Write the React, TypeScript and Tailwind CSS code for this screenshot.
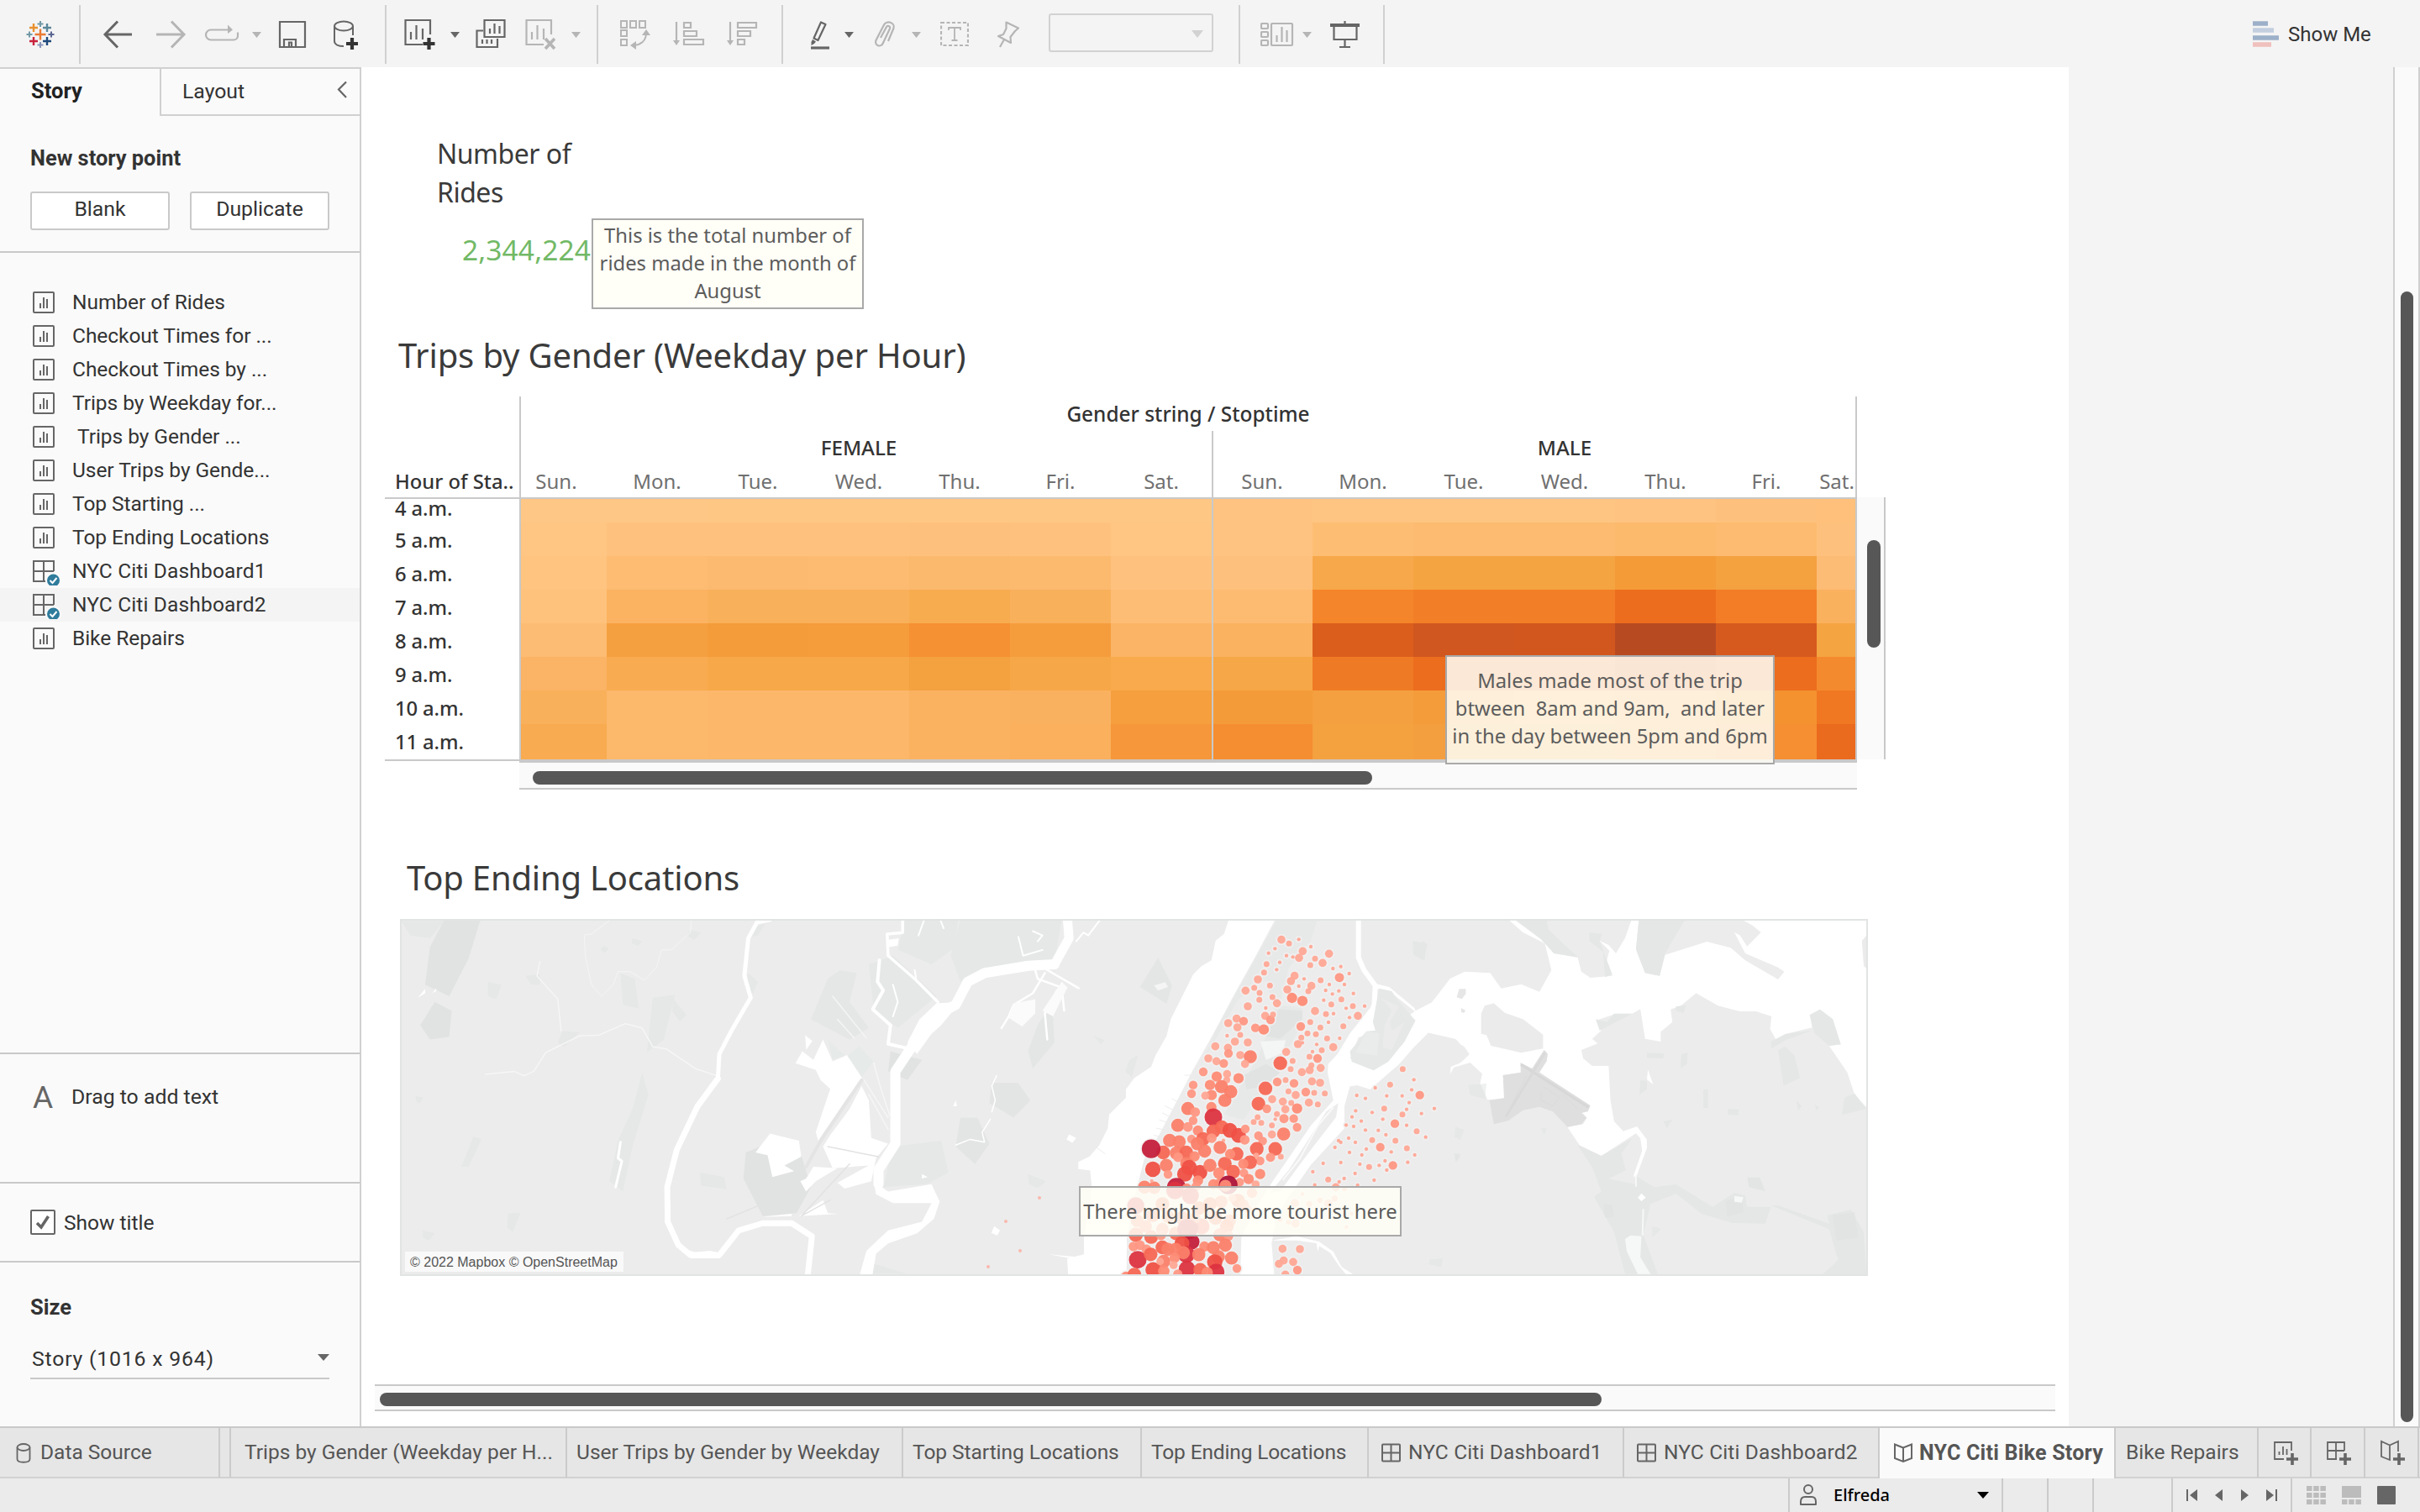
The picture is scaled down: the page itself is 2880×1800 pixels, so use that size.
import type { ReactNode } from 'react'

const UI = 'font-[Roboto,sans-serif]'
const CHART = "font-['Noto_Sans',sans-serif]"

/* ---------- toolbar ---------- */

function Sep({ className = '' }: { className?: string }) {
  return <div className={`h-[70px] w-[2px] shrink-0 bg-[#d0d0d0] ${className}`} />
}

function Ico({ w, h = 40, className = '', children }: { w: number; h?: number; className?: string; children: ReactNode }) {
  return (
    <svg width={w} height={h} viewBox={`0 0 ${w} ${h}`} fill="none" className={`shrink-0 ${className}`}>
      {children}
    </svg>
  )
}

function Caret({ className = '', color = '#b5b5b5' }: { className?: string; color?: string }) {
  return (
    <Ico w={11} h={8} className={className}>
      <path d="M0 1H11L5.5 8Z" fill={color} />
    </Ico>
  )
}

const DARK = '#666666'
const DIM = '#b5b5b5'

function Toolbar() {
  return (
    <div className="flex h-[80px] shrink-0 items-center bg-[#f4f4f4] pt-[2px]">
      <Ico w={34} className="ml-[31px]">
        <g strokeWidth="2.4">
          <path d="M17 13.5v13M10.5 20h13" stroke="#eb7a32" />
          <path d="M9 7v10M4 12h10" stroke="#e8912e" />
          <path d="M25 7v10M20 12h10" stroke="#5b879b" />
          <path d="M9 23v10M4 28h10" stroke="#c8223c" />
          <path d="M25 23v10M20 28h10" stroke="#1f4a7d" />
        </g>
        <g strokeWidth="2">
          <path d="M17 4v7M13.500 7.500h7" stroke="#7299a6" />
          <path d="M17 29v7M13.500 32.500h7" stroke="#8a96ba" />
          <path d="M4 16.500v7M.5 20h7" stroke="#7299a6" />
          <path d="M30 16.500v7M26.500 20h7" stroke="#5b6591" />
        </g>
      </Ico>
      <Sep className="ml-[29px]" />
      <Ico w={36} className="ml-[26px]">
        <path d="M35 20H3M18 4.500L3 20L18 35.500" stroke={DARK} strokeWidth="3" />
      </Ico>
      <Ico w={36} className="ml-[28px]">
        <path d="M0 20H33M18 4.500L33 20L18 35.500" stroke={DIM} strokeWidth="3" />
      </Ico>
      <Ico w={42} className="ml-[21px]">
        <path d="M32 14.500H8a6 6 0 0 0-6 6v0a6 6 0 0 0 6 6H35a5 5 0 0 0 5-5v-4" stroke={DIM} strokeWidth="2.200" />
        <path d="M28 8.500L34 14.500L28 19Z" fill={DIM} />
      </Ico>
      <Caret className="ml-[15px]" />
      <Ico w={34} className="ml-[20px]">
        <path d="M2 5H32V35H2ZM7 35V26H21V35M13 35V29.500H16V35" stroke={DARK} strokeWidth="2.200" />
      </Ico>
      <Ico w={32} className="ml-[32px]">
        <ellipse cx="12" cy="10" rx="11" ry="5.500" stroke={DARK} strokeWidth="2" />
        <path d="M1 10V28C1 32 6 34 12 34M23 10V21" stroke={DARK} strokeWidth="2" />
        <path d="M22 24V38M15 31H29" stroke="#333" strokeWidth="4.200" />
      </Ico>
      <Sep className="ml-[29px]" />
      <Ico w={38} className="ml-[21px]">
        <path d="M31 20V3H1.500V32H22M8 26V17M14.500 26V9M22 26V13" stroke={DARK} strokeWidth="2.200" />
        <path d="M29.500 24V38M22.500 31H36.500" stroke="#333" strokeWidth="4.200" />
      </Ico>
      <Caret className="ml-[17px]" color={DARK} />
      <Ico w={36} className="ml-[19px]">
        <path d="M10.500 3H34.500V23H10.500ZM17 19V13M22.500 19V7M28.500 19V10" stroke={DARK} strokeWidth="2.200" />
        <path d="M9 15.500H1.500V35H26V25M8 31V26M13.500 31V26M19 31V26" stroke={DARK} strokeWidth="2.200" />
      </Ico>
      <Ico w={38} className="ml-[23px]">
        <path d="M31 20V3H1.500V32H22M8 26V17M14.500 26V9M22 26V13" stroke={DIM} strokeWidth="2.200" />
        <path d="M24 25L35 37M35 25L24 37" stroke={DIM} strokeWidth="3.600" />
      </Ico>
      <Caret className="ml-[17px]" />
      <Sep className="ml-[19px]" />
      <Ico w={38} className="ml-[25px]">
        <g stroke={DIM} strokeWidth="2">
          <path d="M2 4H9V12H2ZM13 4H20V12H13ZM24 4H31V12H24ZM2 15H9V22H2ZM2 26H9V33H2Z" />
          <path d="M32 20C31 28 26 32 18 33" />
        </g>
        <path d="M27 21H37L32 14ZM20 28V38L13 33Z" fill={DIM} />
      </Ico>
      <Ico w={38} className="ml-[26px]">
        <path d="M4 5V28M13 6H21V12H13ZM13 16H28V22H13ZM13 26H36V32H13Z" stroke={DIM} strokeWidth="2.200" />
        <path d="M0 27H8L4 33Z" fill={DIM} />
      </Ico>
      <Ico w={38} className="ml-[26px]">
        <path d="M4 5V28M13 6H35V12H13ZM13 16H28V22H13ZM13 26H21V32H13Z" stroke={DIM} strokeWidth="2.200" />
        <path d="M0 27H8L4 33Z" fill={DIM} />
      </Ico>
      <Sep className="ml-[27px]" />
      <Ico w={24} className="ml-[32px]">
        <path d="M13 5.500L18.500 8L9.500 27L4.500 24.500Z" stroke={DARK} strokeWidth="2.200" strokeLinejoin="round" />
        <path d="M3 26L7 28.500L5 31L1.500 33V29Z" fill={DARK} />
        <path d="M1 36H23" stroke={DARK} strokeWidth="3.200" />
      </Ico>
      <Caret className="ml-[17px]" color={DARK} />
      <Ico w={26} className="ml-[24px]">
        <path
          d="M8 24L15 11C16 8.500 20 10 19 13L11 30C8.500 36.500 0 33 2.500 27L12 8.500C15 2.500 25.500 6 23.500 12.500L17 28"
          stroke={DIM}
          strokeWidth="2.200"
        />
      </Ico>
      <Caret className="ml-[19px]" />
      <Ico w={34} className="ml-[23px]">
        <rect x="1" y="6" width="32" height="27" stroke={DIM} strokeWidth="2.200" strokeDasharray="4 2.500" />
        <path d="M10 15V12H24V15M17 12V27M13.500 27H20.500" stroke={DIM} strokeWidth="1.800" />
      </Ico>
      <Ico w={28} className="ml-[33px]">
        <path d="M11.500 5.500L26 12.500L22 16L16.500 23L17 30L2 22L8 20L11.500 13ZM9 26L4 35" stroke={DIM} strokeWidth="2.200" strokeLinejoin="round" />
      </Ico>
      <div className="ml-[34px] mt-[-4px] flex h-[46px] w-[196px] shrink-0 items-center justify-end rounded-[3px] border-2 border-[#d2d2d2] pr-[10px]">
        <Ico w={14} h={9} className="mt-[2px]">
          <path d="M0 0H14L7 9Z" fill="#d2d2d2" />
        </Ico>
      </div>
      <Sep className="ml-[30px]" />
      <Ico w={40} className="ml-[24px]">
        <g stroke={DIM} strokeWidth="2.200">
          <rect x="1" y="7" width="8" height="6" rx="1" />
          <rect x="1" y="17" width="8" height="6" rx="1" />
          <rect x="1" y="27" width="8" height="6" rx="1" />
          <rect x="13" y="7" width="25" height="26" rx="1" />
          <path d="M19.500 29V21M25.500 29V11M31.500 29V15" />
        </g>
      </Ico>
      <Caret className="ml-[10px]" />
      <Ico w={36} className="ml-[22px]">
        <path d="M17.500 4V8M4.500 10V26H31.500V10M17.500 26V34.500M11 35H24" stroke={DARK} strokeWidth="2.200" />
        <path d="M0 9H35" stroke={DARK} strokeWidth="4" />
      </Ico>
      <Sep className="ml-[27px]" />
      <Ico w={34} className="ml-auto">
        <path d="M1 7H19" stroke="#9db0c9" strokeWidth="5.500" />
        <path d="M1 15H26" stroke="#c3cfdf" strokeWidth="5.500" />
        <path d="M1 24H32" stroke="#9db0c9" strokeWidth="5.500" />
        <path d="M1 32H23" stroke="#efc0bd" strokeWidth="5.500" />
      </Ico>
      <span className="ml-[9px] mr-[55px] w-[102px] whitespace-nowrap text-[24px] font-[400] text-[#333]">Show Me</span>
    </div>
  )
}

/* ---------- sidebar ---------- */

const points: [string, boolean][] = [
  ['Number of Rides', false],
  ['Checkout Times for ...', false],
  ['Checkout Times by ...', false],
  ['Trips by Weekday for...', false],
  ['\u00a0Trips by Gender ...', false],
  ['User Trips by Gende...', false],
  ['Top Starting ...', false],
  ['Top Ending Locations', false],
  ['NYC Citi Dashboard1', true],
  ['NYC Citi Dashboard2', true],
  ['Bike Repairs', false],
]

function SheetIcon() {
  return (
    <Ico w={34} h={34}>
      <rect x="1" y="5" width="24" height="24" rx="1" stroke={DARK} strokeWidth="2" />
      <path d="M9 24V18M13 24V11M17 24V13" stroke={DARK} strokeWidth="2" />
    </Ico>
  )
}

function DashIcon() {
  return (
    <Ico w={34} h={34}>
      <path d="M25 17V5H1V29H15M13 5V29M1 17H25" stroke={DARK} strokeWidth="2" />
      <circle cx="24.500" cy="28" r="9.500" fill="#fafafa" />
      <circle cx="24.500" cy="28" r="7.500" fill="#2f7c9c" />
      <path d="M20.500 28L23.500 31L28.500 25" stroke="#fff" strokeWidth="2" />
    </Ico>
  )
}

function Sidebar() {
  return (
    <aside className="flex w-[430px] shrink-0 flex-col border-r-2 border-t-2 border-[#d0d0d0] bg-[#fafafa] text-[24.800px] font-[400] text-[#333]">
      <div className="flex h-[56px] shrink-0">
        <div className="w-[190px] pl-[37px] pt-[6px] text-[25.500px] font-bold leading-[40px] text-[#222]">Story</div>
        <div className="flex flex-1 justify-between border-b-2 border-l-2 border-[#d0d0d0] pl-[25px] pr-[14px]">
          <span className="pt-[7px] leading-[40px]">Layout</span>
          <Ico w={14} h={22} className="mt-[14px]">
            <path d="M12 1.500L3 10.500L12 20" stroke={DARK} strokeWidth="2.200" />
          </Ico>
        </div>
      </div>
      <div className="flex h-[163px] shrink-0 flex-col border-b-2 border-[#c9c9c9] pl-[36px]">
        <div className="mt-[30px] text-[25.400px] font-bold leading-[40px]">New story point</div>
        <div className="mt-[20px] flex gap-[24px]">
          <button className="h-[46px] w-[166px] rounded-[3px] border-2 border-[#c9c9c9] bg-white pb-1">Blank</button>
          <button className="h-[46px] w-[166px] rounded-[3px] border-2 border-[#c9c9c9] bg-white pb-1">Duplicate</button>
        </div>
      </div>
      <div className="h-[954px] shrink-0 border-b-2 border-[#c9c9c9] pt-[39px]">
        {points.map(([name, dash]) => (
          <div key={name} className={`flex h-[40px] items-center pl-[39px] ${name.endsWith('2') ? 'bg-[#f4f4f4]' : ''}`}>
            {dash ? <DashIcon /> : <SheetIcon />}
            <span className={`ml-[13px] whitespace-nowrap text-[24.500px] ${dash ? 'tracking-[0.150px]' : 'tracking-[-0.050px]'}`}>{name}</span>
          </div>
        ))}
      </div>
      <div className="flex h-[154px] shrink-0 border-b-2 border-[#c9c9c9] pl-[39px]">
        <span className="mt-[27px] w-[34px] text-[37px] leading-[50px] text-[#666]">A</span>
        <span className="ml-[12px] mt-[31px] leading-[40px]">Drag to add text</span>
      </div>
      <div className="flex h-[94px] shrink-0 items-center border-b-2 border-[#c9c9c9] pl-[36px]">
        <div className="flex h-[30px] w-[30px] items-center justify-center rounded-[2px] border-2 border-[#666] bg-white">
          <Ico w={18} h={18}>
            <path d="M2 10L7 15L15.500 2" stroke={DARK} strokeWidth="3.600" />
          </Ico>
        </div>
        <span className="ml-[10px] mt-[3px] text-[24.500px]">Show title</span>
      </div>
      <div className="flex flex-1 flex-col pl-[36px]">
        <div className="mt-[33px] text-[25.500px] font-bold leading-[40px]">Size</div>
        <div className="mt-[16px] flex h-[50px] w-[356px] items-center justify-between border-b-2 border-[#c9c9c9] pl-[2px]">
          <span className="mt-[3px] tracking-[0.8px]">Story (1016 x 964)</span>
          <Ico w={14} h={8}>
            <path d="M0 0H14L7 8Z" fill={DARK} />
          </Ico>
        </div>
      </div>
    </aside>
  )
}

/* ---------- heat map ---------- */

const days = ['Sun.', 'Mon.', 'Tue.', 'Wed.', 'Thu.', 'Fri.', 'Sat.']

const heat: [string, string][] = [
  ['4 a.m.', 'fec785 fec785 fec784 fec784 fec783 fec784 fec784 fec381 fec582 fec582 fec582 fec381 fec17d fec07b'],
  ['5 a.m.', 'fec583 fec27e fec27e fec27e fec17d fec27e fec682 fec381 fdbe74 fcbb70 fcbb70 fcba6d fcbb70 fec17d'],
  ['6 a.m.', 'fec480 fdbc72 fbba6f fcbb71 fbb96d fcba6f fec27e fec17d f7a84a f5a442 f5a442 f49b38 f4a140 fdbc75'],
  ['7 a.m.', 'fec27c fbb361 f9b05a f9b05a f8ac50 f9b05b fdbd75 fcbb71 f4852a f27f27 f27f27 ec6d1e f27d26 fab15e'],
  ['8 a.m.', 'fdbc73 f5a040 f49c3a f59c3b f59033 f59d3d fbb465 fab260 dc5e1d d0571f d1571e b84a22 d65a1e f5a442'],
  ['9 a.m.', 'fbb365 f8ab50 f7a848 f7a848 f4a140 f6a747 f9aa4c f6a747 ef7a25 ec6d1e ec6d1e e0611d ec6d1e f48a2e'],
  ['10 a.m.', 'f9b05a fcb86b fcb76a fcb76a fab260 fab15f f59f3e f49b39 f5a040 f49c3a f59f3e f5973a f4922f f07823'],
  ['11 a.m.', 'f8ab50 fcb86b fcb76a fcb76a fab260 fab05c f5973a f58e31 f4a140 f49f3f f49f3f f5973a f58f31 ea6a1e'],
]

function Note({ className, children }: { className: string; children: ReactNode }) {
  return (
    <div className={`absolute whitespace-pre border-2 border-[#a9a9a9] bg-[#fffef6]/85 text-center text-[23.800px] font-[400] leading-[33px] text-[#5c5c5c] ${className}`}>
      {children}
    </div>
  )
}

function HeatMap() {
  return (
    <div className="relative mt-[22px] pl-[28px] text-[24px] leading-[40px]">
      <div className="flex h-[122px] w-[1752px] border-b-2 border-[#c9c9c9]">
        <div className="flex w-[160px] items-end pl-[12px] text-[23.800px] font-[550] text-[#333]">
          <span className="mb-[-1px]">Hour of Sta..</span>
        </div>
        <div className="w-[1592px] overflow-hidden border-x-2 border-[#c9c9c9] pt-[1px]">
          <div className="text-center text-[24.400px] font-[550] text-[#333]">Gender string / Stoptime</div>
          <div className="ml-[-18px] flex w-[1680px]">
            {['FEMALE', 'MALE'].map((g, i) => (
              <div key={g} className={i ? 'w-[838px] border-l-2 border-[#c9c9c9]' : 'w-[840px]'}>
                <div className="text-center text-[24.200px] font-[550] text-[#333]">{g}</div>
                <div className={`flex text-[#707070] ${i ? 'ml-[-2px]' : ''}`}>
                  {days.map((d) => (
                    <div key={d} className={i && d === 'Sat.' ? 'w-[48px] shrink-0 text-center' : 'w-[120px] shrink-0 text-center'}>
                      {d}
                    </div>
                  ))}
                </div>
              </div>
            ))}
          </div>
        </div>
      </div>
      <div className="flex">
        <div className="flex h-[312px] w-[160px] flex-col border-b-2 border-[#c9c9c9] pl-[12px] text-[23.800px] font-[550] tracking-[-0.1px] text-[#333]">
          {heat.map(([h], i) => (
            <div key={h} className={i ? 'h-[40px] shrink-0 leading-[42px]' : 'h-[28px] shrink-0 leading-[23px]'}>
              {h}
            </div>
          ))}
        </div>
        <div className="grid h-[312px] w-[1592px] grid-cols-[102px_repeat(12,120px)_46px] grid-rows-[28px_repeat(6,40px)_42px] border-2 border-t-0 border-[#c9c9c9]">
          {heat.flatMap(([h, row]) =>
            row.split(' ').map((c, j) => (
              <div key={h + j} className={j === 7 ? 'border-l-2 border-[#c9c9c9]' : ''} style={{ backgroundColor: '#' + c }} />
            )),
          )}
        </div>
        <div className="mt-[-2px] flex h-[312px] w-[34px] justify-end border-r-2 border-[#c9c9c9] bg-[#fafafa] pr-[4px] pt-[51px]">
          <div className="h-[128px] w-[16px] rounded-full bg-[#575757]" />
        </div>
      </div>
      <div className="ml-[160px] flex h-[34px] w-[1592px] border-y-2 border-[#c9c9c9] bg-[#fafafa] pl-[16px] pt-[10px]">
        <div className="h-[16px] w-[999px] rounded-full bg-[#575757]" />
      </div>
      <Note className="left-[1290px] top-[308px] h-[130px] w-[392px] pt-[12px]">{'Males made most of the trip\nbtween  8am and 9am,  and later\nin the day between 5pm and 6pm'}</Note>
    </div>
  )
}

/* ---------- map ---------- */

// x, y, radius of each station, in thirds of a pixel from (1240, 1080)
const stations = `
855,116,14 882,130,10 917,115,6 960,141,6 931,157,14 918,181,14 873,173,6 896,178,6 832,148,6 809,164,6 849,197,6 802,203,10 838,223,6 793,233,10 771,258,14
975,184,10 1025,166,14 1002,199,14 958,207,10 1039,219,6 1067,212,6 1097,237,6 1062,251,16 902,245,14 889,264,14 936,256,6 995,261,10 1080,276,6 1026,276,6 917,282,6 962,281,14 951,300,10
876,294,14 893,324,18 930,335,18 1013,297,6 1037,310,6 1060,299,6 1112,308,6 1006,332,6 1069,329,10 1033,347,10 1110,353,10 1152,353,6 1086,361,6 1128,388,14 1098,394,6 1014,382,10 1041,380,6 975,371,14
958,410,10 1023,411,6 924,426,15 994,430,10 1076,425,10 1063,468,6 1018,469,10 978,454,10 948,451,10 926,466,10 914,489,14 930,484,6 981,490,6 1040,500,14 999,511,10 966,516,6 955,534,10 984,540,15 962,565,10 995,574,14 956,582,14 928,589,14
814,280,10 777,306,10 758,288,10 727,298,14 776,331,10 823,321,10 839,343,14 735,354,14 799,360,6 797,388,14 816,402,15 825,383,10 762,431,15 792,437,18 695,398,14 720,407,15 665,414,14 698,429,14 708,456,10 661,459,6 689,480,14 735,483,14 664,502,14 666,522,15 619,497,14 708,528,14 744,534,23 725,560,14 594,540,14 623,550,14 649,558,15
872,517,14 851,557,24 895,549,10 888,578,10 576,588,15 624,605,18 661,596,14 702,611,18 660,617,12 641,641,23 600,635,18 674,659,23 653,690,23 606,671,18 583,673,14 540,635,15 534,666,15 605,714,18 521,719,23 547,732,17
798,647,24 773,702,24 822,686,14 803,720,15 840,624,15 870,617,10 900,629,15 964,622,14 993,627,14 880,658,10 906,671,14 942,660,15 972,663,10 1010,665,10 860,694,14 890,699,10 953,698,14 985,704,10 911,719,18 869,722,14 839,739,10 833,757,6 864,755,16 899,755,15 911,786,15 770,750,10 756,767,10 783,770,10 821,779,10 863,810,23 821,812,14 773,816,15 788,835,15
612,750,31 485,779,23 540,762,15 521,785,17 557,798,18 612,800,24 642,786,24 671,797,26 702,815,26 726,792,15 724,831,17 456,833,23 490,838,23 534,828,15 575,828,24 606,825,17 648,833,6 555,845,23 636,858,23 581,871,23 433,876,24 480,878,23 515,876,24 545,890,18 390,863,33 396,936,27 444,922,23 486,893,17 517,915,23 526,930,27 564,947,26 510,953,27 600,922,23 653,916,24 683,945,24 695,881,24 672,882,18
767,863,24 833,863,24 816,893,16 853,891,10 765,887,10 779,906,15 743,911,24 719,917,18 721,949,15 779,953,18 738,971,18 450,954,15 557,976,18 632,950,20 612,990,18 636,988,20 706,982,15 763,990,14 480,1000,33 665,992,33 655,995,21 366,1000,23 401,1002,22 392,978,6 550,998,16 517,1005,18
335,1066,30 475,1012,31 530,1030,30 700,1048,24 640,1052,22 600,1060,24 560,1075,24 430,1060,24 395,1100,24 450,1105,22 500,1110,24 570,1140,28 530,1140,30 620,1110,24 670,1120,22 720,1062,18 750,1020,18 680,1040,14 340,1120,22 370,1140,22 660,1140,24 430,1150,22 600,1090,14 735,1078,14 545,1110,20
335,1170,25 390,1178,24 478,1165,24 425,1172,17 635,1170,23 666,1174,17 520,1150,36 535,1195,27 327,1212,17 350,1207,17 373,1222,17 430,1215,24 500,1201,26 580,1212,18 655,1207,23 612,1216,23 342,1259,31 388,1240,24 450,1222,23 477,1222,23 516,1240,30 505,1234,23 560,1241,23 630,1248,23 677,1253,23 435,1265,23 474,1252,18 617,1267,27 696,1290,15 397,1295,27 518,1292,29 565,1295,24 622,1302,29 422,1265,13 300,1320,18 330,1312,24 435,1300,20 485,1310,16 590,1305,20 470,1278,14
859,1220,14 921,1221,14 863,1262,14 897,1267,14 846,1274,14 912,1296,15 869,1312,14
1288,578,10 1328,616,6 1243,634,10 1190,645,6 1320,652,6 1349,671,15 1124,672,6 1155,683,6 1231,674,6 1286,674,6 1311,698,6 1401,719,6 1222,719,10 1302,722,6 1120,727,6 1179,733,6 1287,740,10 1355,737,6 1107,749,6 1217,757,6 1140,764,6 1260,773,15 1086,778,6 1113,783,6 1302,779,6 1155,796,6 1201,797,6 1338,800,10 1228,813,6 1370,821,6 1095,825,6 1059,834,6 1067,840,6 1119,840,6 1179,832,10 1262,834,10 1208,857,15 1046,858,6 1158,864,6 1303,861,10 1098,876,6 1142,885,6 1247,874,6 1331,885,6 1067,912,6 1004,915,6 1225,906,6 1306,911,6 1135,918,6 1204,922,6 1168,928,10 1253,922,15 1231,939,6 967,945,6 1118,951,6 1079,969,6 1022,973,10 1061,981,6 1186,975,6 974,992,6 1127,993,6 1049,1000,14
993,1047,9 1022,1058,14 1045,1040,10 954,1060,10 903,1057,14 930,1024,6 850,1115,8 905,1130,14 1105,1095,6 1087,1142,6 880,1125,8 1080,1005,8`
  .trim()
  .split(/\s+/)
  .map((s) => s.split(',').map(Number))

const darkStations = new Set(['665,992', '520,1150', '535,1195', '390,863', '480,1000'])

function tone(x: number, y: number, r: number) {
  if (darkStations.has(`${x},${y}`)) return r === 33 && x === 665 ? '#ad1238' : '#c41f3a'
  if (r >= 29) return '#dc3340'
  if (r >= 26) return '#ef5045'
  if (r >= 24) return '#f66753'
  if (r >= 22) return '#fa7f69'
  if (r >= 18) return '#fd8b75'
  if (r >= 15) return '#fe9783'
  return '#ffa695'
}

const WEST = 'translate(460 1000) scale(0.57398 0.34435)'
const MID = 'translate(1240 1080) scale(0.33333)'
const EAST = 'translate(1600 1060) scale(0.43367 0.33333)'

function River({ d, w, c = '#ffffff' }: { d: string; w: number; c?: string }) {
  return <path d={d} fill="none" stroke={c} strokeWidth={w} vectorEffect="non-scaling-stroke" strokeLinejoin="round" strokeLinecap="round" />
}

function CityMap() {
  return (
    <svg width="1747" height="425" viewBox="476 1094 1747 425" className="block">
      <rect x="476" y="1094" width="1747" height="425" fill="#ececec" />
      <g transform={WEST}>
        <g fill="#e1e2e2">
          <path d="M120 275H195L170 410L130 540L80 500L90 370Z" />
          <path d="M100 560L135 590L130 680L90 690L70 640Z" />
          <path d="M940 450L975 460L960 560L1000 650L960 690L880 620L915 480Z" opacity=".6" />
          <path d="M745 1080L790 1050L860 1090L880 1200L850 1290L780 1300L740 1170Z" />
          <path d="M1255 840L1310 840L1335 900L1300 960L1250 910Z" opacity=".8" />
          <path d="M1190 960L1225 960L1250 1050L1220 1120L1180 1060Z" opacity=".8" />
          <path d="M1380 560L1385 700L1340 790L1330 730L1350 640Z" opacity=".7" />
          <path d="M1045 730L1110 760L1080 830L1040 800Z" />
        </g>
        <g fill="#e5e8e7">
          <path d="M30 280H120L90 340L50 330Z" />
          <path d="M530 805L543 880L510 1060L490 1215L462 1180L480 1040L510 930Z" />
          <path d="M485 460L515 480L523 583L490 570Z" />
          <path d="M552 545L598 535L575 690L540 735Z" />
          <path d="M1075 275H1185L1180 370L1130 430L1060 380Z" />
          <path d="M1000 430L1050 400L1140 540L1060 650L1010 585Z" />
          <path d="M1190 275H1400L1385 420L1240 440L1190 490L1170 400Z" />
          <path d="M1050 1060L1150 1040L1165 1150L1120 1190L1030 1200Z" />
          <path d="M155 1130L180 1025L197 1035L170 1130Z M252 1290L278 1290L262 1355L250 1340Z M650 1150L700 1165L705 1207L652 1195Z" />
          <path d="M1540 760L1558 745L1545 820L1532 800Z M210 490L238 500L228 550L210 540Z M595 550L622 605L608 628L592 590Z" />
          <path d="M75 1350L100 1360L88 1385L75 1375Z M450 365L462 375L452 390L443 378Z M510 340L530 350L522 365L508 358Z" />
          <path d="M1330 1155L1368 1180L1350 1203L1332 1190Z M630 310L652 320L638 345L622 330Z M60 885L76 890L70 910L62 905Z" />
          <path d="M288 470L318 465L318 500L300 500Z M365 660L400 665L368 715L355 700Z M1000 1460L1080 1500H990Z" />
          <path d="M750 460L770 490L760 530L745 520Z M760 300L785 290L770 330L755 335Z" />
        </g>
        <River d="M465 275L425 325L410 328L412 400L425 500L445 540L470 500L480 455L505 455L535 485L560 440L570 380L590 380L630 320L632 275" w={1} c="#f5f5f5" />
        <River d="M318 420L312 470L355 550L362 660M205 810L265 800L285 815L305 800L330 735L400 677L440 675L495 635L530 650L552 715L580 722L640 790L685 815" w={1.300} c="#f7f7f7" />
        <River d="M485 1045L480 1100L488 1110L475 1200" w={3} />
        <River d="M795 275L768 285L750 340L742 470L755 545L715 660L690 740L687 825L645 920L602 1070L582 1200" w={5} />
        <River d="M687 825L645 920L602 1070L582 1200L583 1320L605 1400L630 1435L690 1435L730 1350L780 1325L840 1325L882 1370L873 1510" w={7} />
        <path d="M610 1410L640 1425L670 1420L700 1430L690 1446L630 1446Z" fill="#fff" />
        <River d="M1412 275L1415 340L1385 430" w={11} />
        <River d="M1385 430L1330 435L1240 460L1205 490L1180 570L1125 620L1095 700L1055 800L1055 960L1055 1050L1020 1140L1020 1190" w={12} />
        <path d="M1140 565L1190 560L1150 640L1130 670L1100 740L1080 700L1105 620Z" fill="#fff" />
        <path d="M1010 1180L1040 1215L1130 1190L1147 1250L1135 1310L1100 1360L1040 1395L1015 1430L1007 1510H980L995 1420L1040 1350L1110 1320L1130 1255L1050 1255L1015 1225Z" fill="#fff" />
        <River d="M1070 275L1070 320L1038 325L1040 400L1095 480L1143 560" w={3.500} />
        <River d="M1022 415L1018 490L1030 520L1008 585L1045 640L1040 705L1085 722" w={4} />
        <River d="M1115 275L1103 330M1148 275L1155 305M1095 450L1098 480M1050 500L1060 560L1050 610" w={2} />
        <path d="M1040 345L1062 340L1060 365L1042 370Z" fill="#fff" />
        <River d="M1345 450L1350 480L1400 510L1405 590M1360 440L1435 512M1365 460L1340 530L1300 570L1290 610L1275 650M1390 520L1365 600L1370 690" w={2.500} />
        <path d="M1300 565L1345 550L1345 600L1318 645L1290 615Z M1400 490L1412 510L1382 610L1360 590Z" fill="#fbfbfb" />
        <River d="M1430 350L1445 320L1455 330L1480 275M1310 335L1320 400L1360 380M1340 315L1360 330L1350 350" w={2} />
        <River d="M1265 815L1255 850L1262 900L1255 940M1252 965L1235 1010L1240 1045L1210 1035L1180 1055" w={1.500} />
        <g fill="#fff">
          <path d="M905 690L925 765L960 740L988 830L960 880L895 1040L890 1010L920 860L900 830L890 795L848 772L862 730L885 760Z" />
          <path d="M868 675L883 695L870 725Z" />
          <path d="M985 850L1000 900L1005 1030L1040 1050L1015 1100L1005 1180L950 1205L935 1185L1000 1125L925 1135L905 1060L920 1020L960 930Z" />
          <path d="M795 1015L855 1040L860 1095L825 1125L845 1145L800 1165L790 1090L765 1080Z" />
          <path d="M870 1170L885 1130L935 1135L890 1180L870 1215L858 1180Z" />
          <path d="M855 1300L905 1245L915 1290L938 1292ZM778 1303L840 1292L840 1300Z" />
          <path d="M65 545L80 515L80 530ZM95 530L103 512L103 522Z" />
          <path d="M1110 1155L1122 1165L1110 1170ZM1180 900L1183 920H1175ZM1260 1335L1272 1350L1266 1367L1254 1358Z M1415 1018L1430 1030L1422 1047L1410 1035Z" />
        </g>
        <g fill="#e6eae9">
          <path d="M915 690L950 745L925 760ZM955 745L980 712L1010 765L985 820Z" />
        </g>
        <River d="M985 830L900 1040L870 1130" w={4} c="#e4e4e4" />
        <River d="M1010 770L1025 860L1045 960M990 830L1040 960M1000 880L1040 1000" w={1.500} c="#f6f6f6" />
        <River d="M960 1120L860 1300L920 1245M915 1060L1020 1095M705 1310L850 1210" w={1.500} c="#e2e2e2" />
        <River d="M925 540L995 685M935 620L970 685" w={1.500} c="#f5f5f5" />
      </g>
      <g transform={MID}>
        <path d="M672 30L650 95L620 120L605 190L570 210L540 240L500 320L460 400L445 460L405 530L390 570L330 610L300 650L300 680L240 740L235 790L205 850L170 890L130 910L130 935L172 940L178 1000L165 1100L150 1180L150 1240L90 1255L95 1330H302L303 1185L320 1080L345 980L365 900L420 810L470 715L540 580L610 455L690 305L760 180L840 30Z" fill="#fff" />
        <path d="M25 1240L140 1250L145 1262Z" fill="#fff" />
        <path d="M415 180L465 280L445 345L350 285Z" fill="#e4e6e5" />
        <path d="M400 280L440 268L450 285L415 298Z" fill="#f5f5f5" />
        <path d="M840 42L985 42L960 120L880 220L850 350L930 360L910 450L850 560L720 760L650 740L720 620L770 540L830 380L800 260L700 330L560 580L620 440Z" fill="#e5e8e7" opacity=".75" />
        <path d="M780 480L870 475L860 520L800 545Z" fill="#f4f6f5" />
        <path d="M845 365L930 370L930 400L850 470L800 460ZM720 600L800 560L850 590L800 640L730 650Z" fill="#e0e3e2" />
        <River d="M465 685L485 695M440 710L470 725M430 735L460 750M420 760L450 770M410 790L440 795M400 815L430 820M510 600H545M190 855L225 880" w={1} c="#ededed" />
        <River d="M1130 30L1130 180L1150 225L1190 280L1185 380" w={6} />
        <path d="M1178 270L1240 285L1330 360L1335 375L1240 300L1190 290ZM1172 360L1198 300L1185 410L1210 440L1130 465L1100 540L1180 590L1260 530L1400 330L1500 300V560L1200 640L1110 700L1080 790L960 920L870 1050L835 1120L820 1200L830 1320H708L712 1180L760 1080L820 985L960 780L1040 690L1020 590L1022 560L1055 525L1100 450Z" fill="#fff" />
        <path d="M1058 700L1015 730L945 840L880 940L830 1000L815 1020L850 1015L950 880L1050 750Z" fill="#ececec" />
        <path d="M1040 715L985 780L920 900L860 975" stroke="#fff" strokeWidth="6" fill="none" opacity=".7" />
        <path d="M820 1190L910 1175L990 1195L1040 1230L1070 1285L1110 1310H1085L1060 1280L1030 1235L990 1210L985 1230L980 1200L910 1190Z" fill="#fff" />
        <path d="M1360 120L1377 135L1360 190L1325 170ZM185 460L225 475L210 490ZM1475 880L1495 890L1480 910Z" fill="#e6e8e7" />
      </g>
      <g transform={EAST}>
        {/* Queens shore south of the East River */}
        <path d="M230 508L305 530L343 585L290 650L400 835L200 1050L0 1050L0 770L15 700L55 692L70 710L150 620L190 560Z" fill="#ececec" />
        <path
          d="M195 430L240 400L290 315L330 290L400 295L430 350L485 335L535 362L568 285L550 190L490 150L450 104L466 104L540 175L575 225L640 240L650 290L675 312L735 305L720 250L727 215L700 180L725 195L745 225L770 170L788 104H808L800 210L825 295L865 305L880 230L995 183L1060 205L1100 250L1190 318L1207 290L1190 275L1100 225L1070 150L1085 160L1105 200L1143 150L1120 125L1085 100H1440V785L1400 730L1380 650L1330 555L1362 550L1340 460L1305 425L1277 445L1283 490L1210 513L1185 535L1168 495L1172 450L1130 432H1085L1025 412L965 367L925 410L895 425L900 470L868 505V540L825 530L812 424L790 440L745 440L690 465L705 500L680 530L695 547L650 570L655 600L680 627H725L730 750L740 825L765 860L803 843L830 890V920L800 1025L793 1020L817 930L812 885L800 868L705 948L645 910L612 845L655 835L665 812L650 790L672 768L535 650L557 580L548 570L515 635L483 617V650L435 660L440 742L393 748L372 690L378 655L345 615L300 632L290 656L292 630L320 615L343 585L330 560L305 530L230 508L190 560L150 620L70 710L20 690L-20 640L60 560Z"
          fill="#fff"
        />
        <path d="M95 350L130 360L145 390L195 465L165 540L120 612L80 643L20 612L15 575L60 503L85 500L78 470Z" fill="#e5e8e7" />
        <path d="M100 385L150 415L125 470L130 500L165 470L130 570L105 560L110 480L130 430Z" fill="#ebebeb" />
        <path d="M60 503L95 510L90 590L30 580Z" fill="#eaebeb" />
        <path d="M375 440L385 412L410 403L440 437L490 460L545 515V565L485 580L402 555L390 517L375 512Z" fill="#ebebeb" />
        <path d="M398 750L438 742L435 660L485 650L483 615L515 637L548 570L558 585L555 610L535 650L675 768L668 790L650 795L665 812L650 835L612 845L572 790L535 773L490 785L450 822L410 835Z" fill="#dfdfdf" />
        <path d="M485 622L670 775" stroke="#d7d7d7" strokeWidth="8" />
        <path d="M550 580L443 808" stroke="#d9d9d9" strokeWidth="7" />
        <path d="M500 660L450 790M540 720L540 750L570 770L590 740L545 700M600 730L640 780" stroke="#d9d9d9" strokeWidth="2" fill="none" />
        <path d="M315 352L333 352L333 370L322 388L308 382ZM320 420L332 428L328 438L320 434Z" fill="#e6e6e6" />
        <g fill="#e4e7e6">
          <path d="M470 104H555L560 140L600 190L640 238L575 225L540 175Z" />
          <path d="M808 104H935L900 180L880 225L865 305L825 295L800 210Z" />
          <path d="M672 150L707 155L700 180L720 250L735 300L715 310L710 220L672 180Z" />
          <path d="M1277 445L1305 425L1340 460L1362 550L1330 555L1290 510Z" />
          <path d="M1170 540L1210 513L1283 500L1210 535L1172 565Z" />
          <path d="M188 180L225 190L220 250L188 225Z" />
          <path d="M1190 570L1210 558L1235 590L1250 670L1205 698Z" />
          <path d="M925 585L942 580L940 620L922 635ZM830 580L877 583L875 600L830 598ZM985 710H998V777H985ZM1052 780L1083 782L1080 803L1052 802ZM812 678L830 680L830 710L810 730Z" />
          <path d="M1372 740L1400 725L1432 780L1365 802ZM875 825L900 818L885 850ZM1240 750L1255 770L1245 787ZM1290 765L1303 775L1295 787Z" />
          <path d="M690 460L720 470L740 440L790 440L700 500ZM910 415L938 410L930 437L908 430Z" />
          <path d="M640 910L705 948L790 885L760 940L772 1000L725 1030L800 1050L800 1020L850 1060L910 1050L985 1110L1010 1130L1070 1080L1100 1090L1105 1130H1170L1155 1190L1065 1188L980 1155L910 1083L840 1120L820 1230L860 1370H790L770 1370L740 1220L685 1095L705 1075L680 990Z" />
          <path d="M1170 1125L1190 1125L1330 1190L1325 1160L1390 1140L1425 1220L1433 1375H1310L1355 1320L1330 1210Z" />
        </g>
        <g fill="#dfe2e1">
          <path d="M1340 1160L1400 1150L1410 1240L1350 1250ZM1045 1110L1090 1090L1095 1150L1050 1165ZM1105 1025H1140L1155 1075L1110 1060ZM712 1120L735 1125L740 1165L715 1170Z" opacity=".7" />
          <path d="M340 695L390 690L385 745L345 730ZM305 845L328 855L318 890L302 880ZM300 940H320L305 970ZM540 850H555L548 873ZM235 1318L270 1315L265 1345L232 1335ZM845 1200L868 1210L845 1238Z" opacity=".5" />
        </g>
        <path d="M833 640L847 693L830 675ZM815 1082L827 1097L815 1110L805 1097Z" fill="#fff" />
        <path d="M770 1245L785 1232L815 1235L812 1310L840 1370H805L775 1290ZM1070 1092L1095 1095L1090 1115L1070 1112Z" fill="#f6f8f7" />
        <River d="M820 1140L818 1230M800 1020L800 1055" w={2} c="#f6f8f7" />
        <path d="M1420 180L1433 160V280L1425 270Z" fill="#ebebeb" />
      </g>
      <g fill="#f9b9ae">
        <circle cx="1237" cy="1426" r="2" />
        <circle cx="1197" cy="1454" r="2" />
        <circle cx="1214" cy="1489" r="2" />
        <circle cx="1176" cy="1508" r="2" />
      </g>
      <g transform={MID}>
        <g fill="#f3f1f1" opacity=".8">
          {stations.map(([x, y, r], i) => (
            <circle key={i} cx={x} cy={y} r={r + 6} />
          ))}
        </g>
        {stations.map(([x, y, r], i) => (
          <circle key={i} cx={x} cy={y} r={r + 0.5} fill={tone(x, y, r)} fillOpacity=".95" />
        ))}
      </g>
      <rect x="477" y="1095" width="1745" height="423" fill="none" stroke="#e2e4e4" strokeWidth="2" />
    </svg>
  )
}

/* ---------- story canvas ---------- */

function Story() {
  return (
    <main className={`w-[2032px] shrink-0 bg-white text-[#3a3a3a] ${CHART}`}>
      <section className="relative h-[314px] pl-[90px] pt-[80px]">
        <h2 className="w-[180px] text-[32px] font-[400] leading-[46px] tracking-[-0.5px]">
          Number of
          <br />
          Rides
        </h2>
        <div className="ml-[30px] mt-[25px] text-[33.500px] font-[400] leading-[40px] tracking-[0.1px] text-[#72b966]">2,344,224</div>
        <Note className="left-[274px] top-[180px] h-[108px] w-[324px] pt-[2px]">{'This is the total number of\nrides made in the month of\nAugust'}</Note>
      </section>
      <section>
        <h1 className="whitespace-nowrap pl-[44px] pt-[1px] text-[40px] font-[400] leading-[56px] tracking-[-0.140px]">Trips by Gender (Weekday per Hour)</h1>
        <div className="mt-[-1px]">
          <HeatMap />
        </div>
      </section>
      <section className="mt-[76px]">
        <h1 className="pl-[54px] pt-[1px] text-[40px] font-[400] leading-[56px] tracking-[-0.2px]">Top Ending Locations</h1>
        <div className="relative ml-[46px] mt-[21px] h-[425px] w-[1747px]">
          <CityMap />
          <div className="absolute bottom-[5px] left-[6px] h-[24px] w-[260px] bg-white/70 pl-[6px] font-['Liberation_Sans',Arial,sans-serif] text-[16px] leading-[25px] text-[#555]">
            © 2022 Mapbox © OpenStreetMap
          </div>
          <Note className="left-[808px] top-[318px] flex h-[60px] w-[384px] items-center justify-center">There might be more tourist here</Note>
        </div>
      </section>
      <div className="ml-[16px] mt-[129px] flex h-[32px] w-[2000px] border-y-2 border-[#c9c9c9] bg-[#fafafa] pl-[6px] pt-[8px]">
        <div className="h-[16px] w-[1454px] rounded-full bg-[#575757]" />
      </div>
    </main>
  )
}

/* ---------- sheet tabs and status bar ---------- */

function TabGrid() {
  return (
    <Ico w={24} h={24} className="mr-[8px]">
      <rect x="1" y="1.500" width="21" height="20" rx="1" stroke={DARK} strokeWidth="2" />
      <path d="M11.500 2V21M1 11.500H22" stroke={DARK} strokeWidth="2" />
    </Ico>
  )
}

function Tab({ w, children, active = false }: { w: string; children: ReactNode; active?: boolean }) {
  return (
    <div
      className={`relative flex shrink-0 items-center whitespace-nowrap border-r-2 border-[#cbcbcb] ${w} ${
        active ? 'h-[60px] bg-[#fafafa] font-bold' : 'h-[59px]'
      }`}
    >
      {children}
    </div>
  )
}

function Plus() {
  return <path d="M23 16V30M16 23H30" stroke={DARK} strokeWidth="3.600" />
}

function Tabs() {
  return (
    <div className="flex h-[62px] shrink-0 border-t-2 border-[#c9c9c9] bg-[#e6e6e6] text-[24.500px] font-[400] text-[#555] shadow-[inset_0_-2px_0_#d2d2d2]">
      <Tab w="w-[262px] pl-[19px]">
        <Ico w={18} h={24} className="mr-[11px]">
          <ellipse cx="9" cy="5" rx="7.500" ry="4" stroke={DARK} strokeWidth="1.800" />
          <path d="M1.500 5V19C1.500 24 16.500 24 16.500 19V5" stroke={DARK} strokeWidth="1.800" />
        </Ico>
        <span>Data Source</span>
      </Tab>
      <Tab w="w-[13px]">{null}</Tab>
      <Tab w="w-[400px] pl-[16px]">Trips by Gender (Weekday per H...</Tab>
      <Tab w="w-[400px] pl-[11px]">User Trips by Gender by Weekday</Tab>
      <Tab w="w-[284px] pl-[11px] tracking-[-0.050px]">Top Starting Locations</Tab>
      <Tab w="w-[270px] pl-[11px] tracking-[-0.150px]">Top Ending Locations</Tab>
      <Tab w="w-[304px] pl-[15px]">
        <TabGrid />
        <span className="tracking-[0.150px]">NYC Citi Dashboard1</span>
      </Tab>
      <Tab w="w-[304px] pl-[15px]">
        <TabGrid />
        <span className="tracking-[0.150px]">NYC Citi Dashboard2</span>
      </Tab>
      <Tab w="w-[281px] pl-[16px]" active>
        <Ico w={24} h={24} className="mr-[7px]">
          <path d="M12 5.500L2 1.500V18L12 22L22 18V1.500ZM12 5.500V22" stroke={DARK} strokeWidth="2" />
        </Ico>
        <span className="text-[25px] tracking-[0.250px]">NYC Citi Bike Story</span>
      </Tab>
      <Tab w="w-[170px] pl-[12px]">Bike Repairs</Tab>
      <Tab w="w-[63px] pl-[17px]">
        <Ico w={32} h={32}>
          <path d="M22 13V3H2V23H13M7.500 18V14M12 18V8M16.500 18V11" stroke={DARK} strokeWidth="1.800" />
          <Plus />
        </Ico>
      </Tab>
      <Tab w="w-[64px] pl-[17px]">
        <Ico w={32} h={32}>
          <path d="M22 13V3H2V23H13M12 3V23M2 13H22" stroke={DARK} strokeWidth="1.800" />
          <Plus />
        </Ico>
      </Tab>
      <Tab w="w-[64px] pl-[17px]">
        <Ico w={32} h={32}>
          <path d="M12 6.500L2 2V20L12 24V6.500L22 2V14" stroke={DARK} strokeWidth="1.800" />
          <Plus />
        </Ico>
      </Tab>
    </div>
  )
}

function Status() {
  return (
    <div className="flex h-[40px] shrink-0 bg-[#ebebeb]">
      <div className="ml-[2128px] flex w-[256px] items-center border-x-2 border-[#cbcbcb] pl-[11px] pr-[15px]">
        <Ico w={22} h={28}>
          <circle cx="11" cy="7" r="5" stroke={DARK} strokeWidth="2" />
          <path d="M2 25V22C2 17 5 16 7 16H15C17 16 20 17 20 22V25Z" stroke={DARK} strokeWidth="2" strokeLinejoin="round" />
        </Ico>
        <span className="ml-[19px] flex-1 font-['Noto_Sans',sans-serif] text-[20px] font-[500] text-black">Elfreda</span>
        <Ico w={14} h={8}>
          <path d="M0 0H14L7 8Z" fill="#000" />
        </Ico>
      </div>
      <div className="w-[54px] border-r-2 border-[#cbcbcb]" />
      <div className="w-[54px] border-r-2 border-[#cbcbcb]" />
      <div className="w-[94px] border-r-2 border-[#cbcbcb]" />
      <div className="flex w-[142px] items-center justify-between border-r-2 border-[#cbcbcb] px-[16px]">
        <Ico w={13} h={16}>
          <path d="M1 1V15" stroke={DARK} strokeWidth="2" />
          <path d="M13 1V15L4 8Z" fill={DARK} />
        </Ico>
        <Ico w={9} h={16}>
          <path d="M9 1V15L0 8Z" fill={DARK} />
        </Ico>
        <Ico w={9} h={16}>
          <path d="M0 1V15L9 8Z" fill={DARK} />
        </Ico>
        <Ico w={13} h={16}>
          <path d="M12 1V15" stroke={DARK} strokeWidth="2" />
          <path d="M0 1V15L9 8Z" fill={DARK} />
        </Ico>
      </div>
      <div className="flex items-center gap-[19px] pl-[17px]">
        <Ico w={23} h={22}>
          <path d="M0 3H23M0 11H23M0 19H23" stroke="#bcbcbc" strokeWidth="6" strokeDasharray="6.500 1.700" />
        </Ico>
        <Ico w={23} h={22}>
          <path d="M0 0H23V14H0Z" fill="#bcbcbc" />
          <path d="M0 19H23" stroke="#bcbcbc" strokeWidth="6" strokeDasharray="6.500 1.700" />
        </Ico>
        <Ico w={23} h={22}>
          <rect width="22" height="22" rx="1" fill={DARK} />
        </Ico>
      </div>
    </div>
  )
}

export default function App() {
  return (
    <div className={`flex h-[1800px] w-[2880px] flex-col overflow-hidden ${UI}`}>
      <Toolbar />
      <div className="flex h-[1618px] shrink-0 bg-[#f4f4f4]">
        <Sidebar />
        <Story />
        <div className="ml-auto flex w-[32px] justify-center border-x-2 border-[#d0d0d0] bg-[#fafafa] pt-[267px]">
          <div className="h-[1346px] w-[15px] rounded-full bg-[#575757]" />
        </div>
      </div>
      <Tabs />
      <Status />
    </div>
  )
}
